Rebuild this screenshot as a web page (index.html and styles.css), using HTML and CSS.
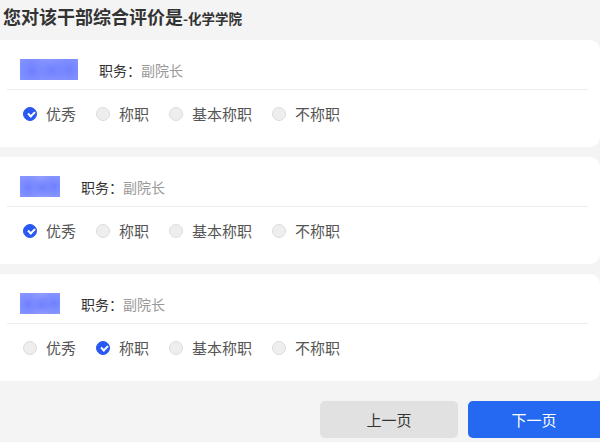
FILE: index.html
```html
<!DOCTYPE html>
<html lang="zh">
<head>
<meta charset="utf-8">
<link rel="stylesheet" href="styles.css">
</head>
<body>
<div class="page">
  <h1 class="title">您对该干部综合评价是<span class="sub">-化学学院</span></h1>

  <div class="card">
    <div class="head">
      <span class="name w58"></span>
      <span class="duty">职务：<em>副院长</em></span>
    </div>
    <div class="opts">
      <span class="opt"><i class="radio on"></i>优秀</span>
      <span class="opt"><i class="radio"></i>称职</span>
      <span class="opt"><i class="radio"></i>基本称职</span>
      <span class="opt"><i class="radio"></i>不称职</span>
    </div>
  </div>

  <div class="card">
    <div class="head">
      <span class="name w40"></span>
      <span class="duty">职务：<em>副院长</em></span>
    </div>
    <div class="opts">
      <span class="opt"><i class="radio on"></i>优秀</span>
      <span class="opt"><i class="radio"></i>称职</span>
      <span class="opt"><i class="radio"></i>基本称职</span>
      <span class="opt"><i class="radio"></i>不称职</span>
    </div>
  </div>

  <div class="card">
    <div class="head">
      <span class="name w40"></span>
      <span class="duty">职务：<em>副院长</em></span>
    </div>
    <div class="opts">
      <span class="opt"><i class="radio"></i>优秀</span>
      <span class="opt"><i class="radio on"></i>称职</span>
      <span class="opt"><i class="radio"></i>基本称职</span>
      <span class="opt"><i class="radio"></i>不称职</span>
    </div>
  </div>

  <div class="actions">
    <button class="btn prev">上一页</button>
    <button class="btn next">下一页</button>
  </div>
</div>
</body>
</html>
```

FILE: styles.css
```css
html, body {
  margin: 0;
  padding: 0;
  background: #f4f4f4;
  overflow: hidden;
}
body {
  width: 600px;
  height: 442px;
  font-family: "Noto Sans CJK SC", "Noto Sans", sans-serif;
  color: #333;
}
.title {
  margin: 0;
  height: 40px;
  padding: 0 0 0 3px;
  box-sizing: border-box;
  display: flex;
  align-items: baseline;
  font-size: 18px;
  font-weight: bold;
  line-height: 32px;
  color: #333;
}
.title .sub {
  font-size: 13.5px;
}
.card {
  background: #fff;
  border-radius: 0 10px 10px 0;
  height: 107px;
  margin-bottom: 10px;
  display: flex;
  flex-direction: column;
}
.head {
  height: 50px;
  box-sizing: border-box;
  padding: 10px 0 0 13px;
  display: flex;
  align-items: center;
  gap: 21px;
  border-bottom: 1px solid #ededed;
  margin: 0 12px 0 7px;
}
.name {
  display: block;
  height: 21px;
  background:
    radial-gradient(circle at 20% 55%, #6f80ff 0, rgba(111,128,255,0) 45%),
    radial-gradient(circle at 55% 55%, #6f80ff 0, rgba(111,128,255,0) 40%),
    radial-gradient(circle at 85% 50%, #6f80ff 0, rgba(111,128,255,0) 40%),
    #8f9cff;
  filter: blur(0.6px);
}
.w58 { width: 58px; }
.w40 { width: 40px; }
.duty {
  font-size: 14px;
  color: #333;
  line-height: 20px;
}
.duty em {
  font-style: normal;
  color: #999;
}
.opts {
  display: flex;
  padding: 12px 0 0 23px;
}
.opt {
  display: flex;
  align-items: center;
  font-size: 15px;
  line-height: 24px;
  color: #555;
  margin-right: 20px;
}
.radio {
  display: block;
  width: 14px;
  height: 14px;
  box-sizing: border-box;
  border-radius: 50%;
  background: #eee;
  border: 1px solid #dcdcdc;
  margin-right: 9px;
  position: relative;
}
.radio.on {
  background: #2a58f2;
  border-color: #2a58f2;
}
.radio.on::after {
  content: "";
  position: absolute;
  left: 3.5px;
  top: 2.5px;
  width: 5px;
  height: 3px;
  border-left: 2px solid #fff;
  border-bottom: 2px solid #fff;
  transform: rotate(-45deg);
}
.actions {
  display: flex;
  justify-content: flex-end;
  gap: 10px;
  padding-top: 10px;
}
.btn {
  height: 37px;
  width: 138px;
  border: none;
  border-radius: 5px;
  font-family: inherit;
  font-size: 15px;
  padding: 0;
}
.prev {
  background: #e1e1e1;
  color: #333;
}
.next {
  background: #2568f1;
  color: #fff;
  width: 132px;
  border-radius: 5px 0 0 5px;
}
```
